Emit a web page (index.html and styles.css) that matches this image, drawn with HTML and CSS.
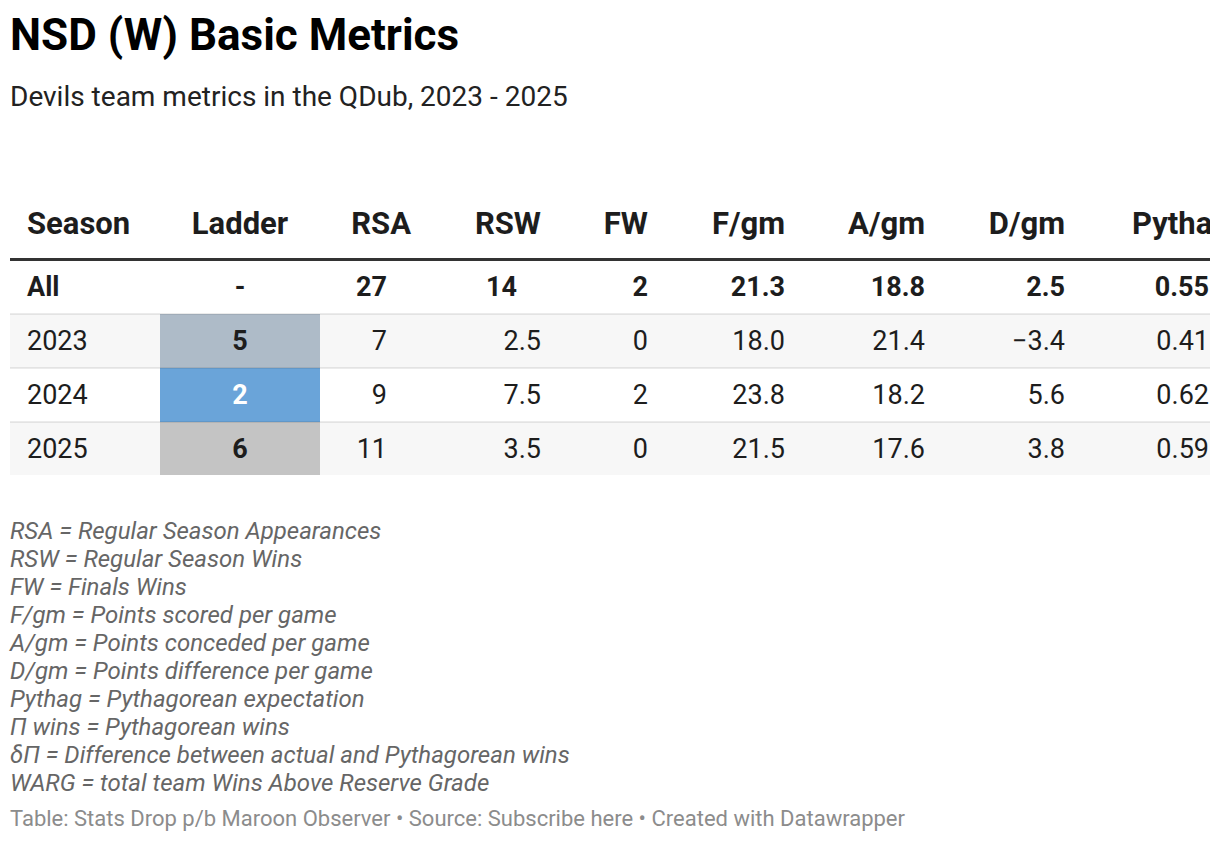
FILE: index.html
```html
<!DOCTYPE html>
<html lang="en">
<head>
<meta charset="utf-8">
<title>NSD (W) Basic Metrics</title>
<link rel="stylesheet" href="styles.css">
</head>
<body>
<div class="chart">
  <h1 class="title">NSD (W) Basic Metrics</h1>
  <p class="subtitle">Devils team metrics in the QDub, 2023 - 2025</p>

  <div class="table-wrap">
    <table class="metrics">
      <colgroup>
        <col class="c-season">
        <col class="c-ladder">
        <col class="c-rsa">
        <col class="c-rsw">
        <col class="c-fw">
        <col class="c-f">
        <col class="c-a">
        <col class="c-d">
        <col class="c-py">
      </colgroup>
      <thead>
        <tr>
          <th class="left">Season</th>
          <th class="center">Ladder</th>
          <th class="num">RSA</th>
          <th class="num">RSW</th>
          <th class="num">FW</th>
          <th class="num">F/gm</th>
          <th class="num">A/gm</th>
          <th class="num">D/gm</th>
          <th class="num py-head">Pythag</th>
        </tr>
      </thead>
      <tbody>
        <tr class="total">
          <td class="left">All</td>
          <td class="center">-</td>
          <td class="num int">27</td>
          <td class="num int">14</td>
          <td class="num">2</td>
          <td class="num">21.3</td>
          <td class="num">18.8</td>
          <td class="num">2.5</td>
          <td class="num py">0.55</td>
        </tr>
        <tr class="shade">
          <td class="left">2023</td>
          <td class="center rank rank-5">5</td>
          <td class="num int">7</td>
          <td class="num">2.5</td>
          <td class="num">0</td>
          <td class="num">18.0</td>
          <td class="num">21.4</td>
          <td class="num">−3.4</td>
          <td class="num py">0.41</td>
        </tr>
        <tr>
          <td class="left">2024</td>
          <td class="center rank rank-2">2</td>
          <td class="num int">9</td>
          <td class="num">7.5</td>
          <td class="num">2</td>
          <td class="num">23.8</td>
          <td class="num">18.2</td>
          <td class="num">5.6</td>
          <td class="num py">0.62</td>
        </tr>
        <tr class="shade">
          <td class="left">2025</td>
          <td class="center rank rank-6">6</td>
          <td class="num int">11</td>
          <td class="num">3.5</td>
          <td class="num">0</td>
          <td class="num">21.5</td>
          <td class="num">17.6</td>
          <td class="num">3.8</td>
          <td class="num py">0.59</td>
        </tr>
      </tbody>
    </table>
  </div>

  <div class="notes">
    <p>RSA = Regular Season Appearances</p>
    <p>RSW = Regular Season Wins</p>
    <p>FW = Finals Wins</p>
    <p>F/gm = Points scored per game</p>
    <p>A/gm = Points conceded per game</p>
    <p>D/gm = Points difference per game</p>
    <p>Pythag = Pythagorean expectation</p>
    <p>Π wins = Pythagorean wins</p>
    <p>δΠ = Difference between actual and Pythagorean wins</p>
    <p>WARG = total team Wins Above Reserve Grade</p>
  </div>

  <p class="footer">Table: Stats Drop p/b Maroon Observer • Source: Subscribe here • Created with Datawrapper</p>
</div>
</body>
</html>
```

FILE: styles.css
```css
* {
  box-sizing: border-box;
}

html, body {
  margin: 0;
  padding: 0;
  background: #ffffff;
}

body {
  font-family: Roboto, "Liberation Sans", Arial, sans-serif;
  color: #1d1d1d;
}

.chart {
  padding: 10px;
  width: 1220px;
}

.title {
  margin: 0;
  font-size: 44px;
  line-height: 50px;
  font-weight: 700;
  color: #000;
}

.subtitle {
  margin: 19px 0 0;
  font-size: 28px;
  line-height: 36px;
  font-weight: 400;
  color: #222;
}

.table-wrap {
  margin-top: 82px;
  width: 1200px;
  overflow: hidden;
}

.metrics {
  width: 1229px;
  table-layout: fixed;
  border-collapse: collapse;
  font-size: 27px;
  line-height: 32px;
}

.c-season { width: 150px; }
.c-ladder { width: 160px; }
.c-rsa { width: 105px; }
.c-rsw { width: 130px; }
.c-fw { width: 107px; }
.c-f { width: 137px; }
.c-a { width: 140px; }
.c-d { width: 140px; }
.c-py { width: 160px; }

.metrics th {
  font-size: 31px;
  font-weight: 700;
  padding: 11px 14px 18px;
  border-bottom: 3px solid #333;
  white-space: nowrap;
}

.metrics th.py-head {
  padding-right: 9px;
}

.metrics td {
  padding: 10px 14px;
  white-space: nowrap;
  border-top: 2px solid rgba(0, 0, 0, 0.08);
}

.metrics tr.total td {
  border-top: 0;
  font-weight: 700;
}

.metrics tr.shade td {
  background: #f7f7f7;
}

.left {
  text-align: left;
  padding-left: 17px !important;
}

.center {
  text-align: center;
}

.num {
  text-align: right;
}

.metrics td.int {
  padding-right: 38px;
}

.metrics td.py {
  padding-right: 30px;
}

.metrics tr td.rank {
  font-weight: 700;
}

.metrics tr td.rank-5 {
  background: #aebbc8;
}

.metrics tr td.rank-2 {
  background: #6aa4d9;
  color: #fff;
}

.metrics tr td.rank-6 {
  background: #c4c4c4;
}

.notes {
  margin-top: 42px;
  font-size: 24px;
  line-height: 28px;
  font-style: italic;
  color: #666;
}

.notes p {
  margin: 0;
}

.footer {
  margin: 8px 0 0;
  font-size: 22px;
  line-height: 28px;
  color: #8c8c8c;
}
```
